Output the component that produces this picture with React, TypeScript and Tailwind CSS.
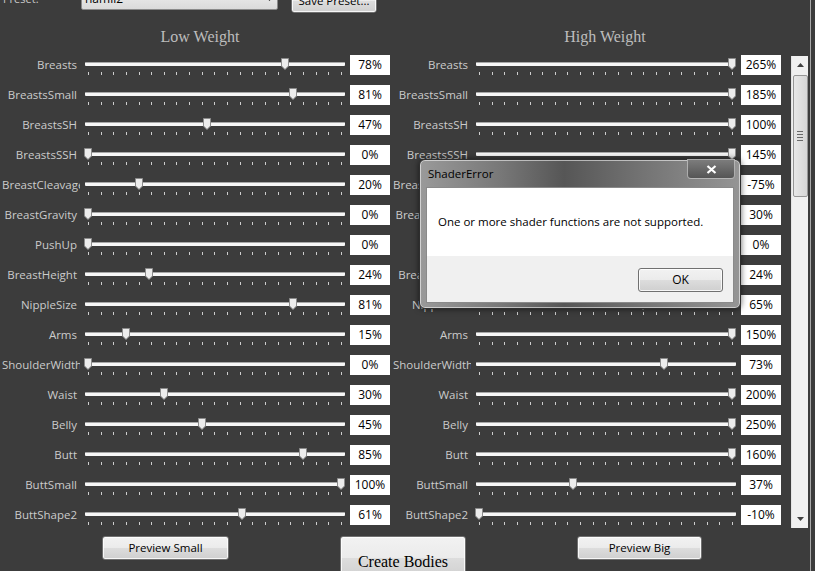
import React from "react";

// name, low weight %, high weight %
const sliders: [string, number, number][] = [
  ["Breasts", 78, 265],
  ["BreastsSmall", 81, 185],
  ["BreastsSH", 47, 100],
  ["BreastsSSH", 0, 145],
  ["BreastCleavage", 20, -75],
  ["BreastGravity", 0, 30],
  ["PushUp", 0, 0],
  ["BreastHeight", 24, 24],
  ["NippleSize", 81, 65],
  ["Arms", 15, 150],
  ["ShoulderWidth", 0, 73],
  ["Waist", 30, 200],
  ["Belly", 45, 250],
  ["Butt", 85, 160],
  ["ButtSmall", 100, 37],
  ["ButtShape2", 61, -10],
];

const ticks = Array.from({ length: 21 }, (_, i) => i);

const btn =
  "border border-[#707070] rounded-[3px] bg-[linear-gradient(#f2f2f2,#ebebeb_50%,#dddddd_50%,#cfcfcf)] shadow-[inset_0_0_0_1px_rgba(255,255,255,0.8)] text-black";

function Thumb({ value }: { value: number }) {
  const v = Math.max(0, Math.min(100, value));
  const left = 3 + (v / 100) * 253 - 4;
  return (
    <svg width="8" height="12" viewBox="0 0 8 12" className="absolute top-[3px]" style={{ left }}>
      <path d="M0.5 0.5H7.5V8L4 11.5L0.5 8Z" fill="#ececec" stroke="#8c8c8c" />
    </svg>
  );
}

function Slider({ label, value }: { label: string; value: number }) {
  return (
    <div className="flex w-[391px] h-[30px] items-start">
      <div className="flex w-[80px] h-[20px] pl-[2px] pr-[3px] overflow-hidden items-center">
        <span className="ml-auto shrink-0 whitespace-nowrap text-[11.5px] text-[#cbcbcb]">{label}</span>
      </div>
      <div className="relative ml-[5px] w-[260px] h-[30px]">
        <div className="mt-[7px] h-[4px] rounded-[1px] bg-[#f7f7f7] border-t border-[#a8a8a8]" />
        <div className="mt-[6px] mx-[3px] flex justify-between">
          {ticks.map((t) => (
            <div key={t} className="w-px h-[3px] bg-[#cdcdcd]" />
          ))}
        </div>
        <Thumb value={value} />
      </div>
      <div className="ml-[5px] w-[40px] h-[20px] bg-white text-center text-[12px] leading-[20px] text-black">
        {value}%
      </div>
    </div>
  );
}

function Scrollbar() {
  return (
    <div className="h-[472px] w-[17px] bg-[#f0f0f0] border-l border-[#e4e4e4] flex flex-col items-center">
      <svg width="7" height="4" viewBox="0 0 7 4" className="mt-[7px]">
        <path d="M0 4L3.5 0L7 4Z" fill="#404040" />
      </svg>
      <div className="mt-[8px] w-[15px] h-[122px] rounded-[2px] border border-[#979797] bg-[linear-gradient(90deg,#e8e8e8,#d6d6d6)] flex flex-col items-center justify-center gap-[2px]">
        <div className="w-[6px] h-px bg-[#6a6a6a]" />
        <div className="w-[6px] h-px bg-[#6a6a6a]" />
        <div className="w-[6px] h-px bg-[#6a6a6a]" />
        <div className="w-[6px] h-px bg-[#6a6a6a]" />
      </div>
      <div className="flex-1" />
      <svg width="7" height="4" viewBox="0 0 7 4" className="mb-[7px]">
        <path d="M0 0L3.5 4L7 0Z" fill="#404040" />
      </svg>
    </div>
  );
}

function ErrorDialog() {
  return (
    <div className="absolute left-[419px] top-[159px] w-[322px] h-[150px] rounded-[6px] border border-[#2e2e2e] bg-[linear-gradient(90deg,#9a9a9a_0%,#787878_25%,#565656_45%,#747474_70%,#959595_100%)] shadow-[inset_0_0_0_1px_rgba(255,255,255,0.55),0_0_6px_rgba(0,0,0,0.6)] px-[6px] pb-[5px] flex flex-col font-['Open_Sans',sans-serif]">
      <div className="h-[27px] shrink-0 flex items-start">
        <span className="mt-[5px] ml-[2px] text-[11.5px] text-black">ShaderError</span>
        <div className="ml-auto mr-[-1px] mt-[-1px] w-[48px] h-[20px] rounded-b-[4px] border border-[#cfcfcf]/70 bg-[linear-gradient(#7c7c7c,#555555)] flex items-center justify-center">
          <svg width="11" height="9" viewBox="0 0 11 9">
            <path d="M1.5 1L9.5 8M9.5 1L1.5 8" stroke="#fff" strokeWidth="2.2" />
          </svg>
        </div>
      </div>
      <div className="flex-1 flex flex-col border border-[#8a8a8a]">
        <div className="h-[68px] shrink-0 bg-white flex items-center pl-[11px] text-[11.5px] text-black">
          One or more shader functions are not supported.
        </div>
        <div className="flex-1 bg-[#f0f0f0] flex items-start justify-end pr-[10px] pt-[12px]">
          <div className={`${btn} w-[85px] h-[24px] flex items-center justify-center text-[12px]`}>OK</div>
        </div>
      </div>
    </div>
  );
}

export default function App() {
  return (
    <div className="relative w-[815px] h-[571px] overflow-hidden bg-[#3c3c3c] flex font-['Open_Sans',sans-serif]">
      <div className="w-[791px] shrink-0 flex flex-col">
        {/* preset bar, mostly scrolled off the top */}
        <div className="h-[14px] shrink-0 flex items-end">
          <div className="w-[81px] shrink-0 pl-[3px] mb-[8px] text-[11px] leading-[14px] text-[#c9c9c9]">Preset:</div>
          <div className="w-[197px] h-[22px] mb-[4px] shrink-0 border border-[#8a8a8a] rounded-[2px] bg-[linear-gradient(#f0f0f0,#dadada)] flex items-center pl-[3px] pr-[4px] text-[12px] text-black">
            hamli2
            <svg width="7" height="4" viewBox="0 0 7 4" className="ml-auto">
              <path d="M0 0L3.5 4L7 0Z" fill="#222" />
            </svg>
          </div>
          <div className={`${btn} ml-[13px] mb-[1px] w-[86px] h-[24px] shrink-0 flex items-center justify-center text-[11.5px] outline outline-1 outline-[#3a3a3a]`}>
            Save Preset...
          </div>
        </div>

        <div className="h-[41px] shrink-0 pt-[14px] flex font-['Liberation_Serif',serif] text-[16px] leading-[18px] text-[#bdbdbd]">
          <div className="w-[400px] shrink-0 text-center">Low Weight</div>
          <div className="ml-[5px] w-[400px] shrink-0 text-center">High Weight</div>
        </div>

        <div className="shrink-0 flex flex-col">
          {sliders.map(([name, lo, hi]) => (
            <div key={name} className="flex">
              <Slider label={name} value={lo} />
              <Slider label={name} value={hi} />
            </div>
          ))}
        </div>

        <div className="shrink-0 mt-[1px] flex items-start">
          <div className={`${btn} ml-[102px] w-[127px] h-[24px] flex items-center justify-center text-[11.5px]`}>Preview Small</div>
          <div className={`${btn} ml-[111px] w-[126px] h-[44px] pt-[13px] flex justify-center font-['Liberation_Serif',serif] text-[16px]`}>
            Create Bodies
          </div>
          <div className={`${btn} ml-[111px] w-[125px] h-[24px] flex items-center justify-center text-[11.5px]`}>Preview Big</div>
        </div>
      </div>

      <div className="pt-[56px] shrink-0">
        <Scrollbar />
      </div>
      <div className="w-[7px] shrink-0 flex">
        <div className="ml-[2px] w-px h-full bg-[#a9a9a9]" />
      </div>

      <ErrorDialog />
    </div>
  );
}
